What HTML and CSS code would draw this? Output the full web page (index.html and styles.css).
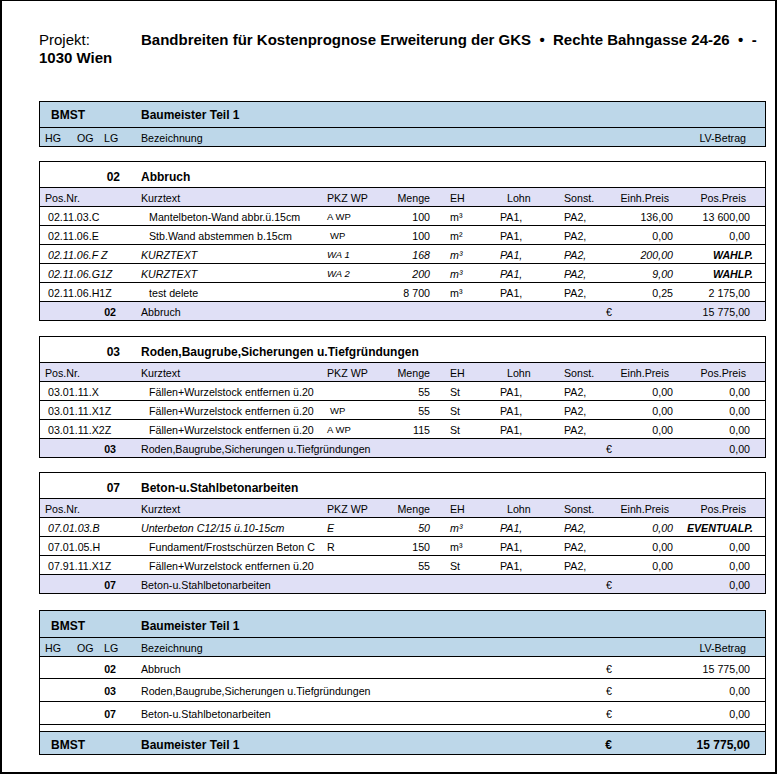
FILE: index.html
```html
<!DOCTYPE html>
<html lang="de">
<head>
<meta charset="utf-8">
<title>Bandbreiten für Kostenprognose</title>
<link rel="stylesheet" href="styles.css">
</head>
<body>
<div class="page">
  <div class="project">
    <div class="pline"><span class="label">Projekt:</span><span class="title">Bandbreiten für Kostenprognose Erweiterung der GKS &nbsp;•&nbsp; Rechte Bahngasse 24-26 &nbsp;•&nbsp; -</span></div>
    <div class="pline title">1030 Wien</div>
  </div>

  <div class="tbl bmst">
    <div class="srow blue head1"><span class="code">BMST</span><span class="name">Baumeister Teil 1</span></div>
    <div class="srow blue colh"><span class="lvl"><span>HG</span><span>OG</span><span>LG</span></span><span class="name">Bezeichnung</span><span class="eur"></span><span class="amt lvb">LV-Betrag</span></div>
  </div>

  <div class="tbl sec">
    <div class="row ti"><span class="num">02</span><span class="tname">Abbruch</span></div>
    <div class="row hd"><span class="pos">Pos.Nr.</span><span class="kt">Kurztext</span><span class="pkz">PKZ WP</span><span class="menge">Menge</span><span class="eh">EH</span><span class="lohn">Lohn</span><span class="sonst">Sonst.</span><span class="ep">Einh.Preis</span><span class="pp">Pos.Preis</span></div>
    <div class="row d"><span class="pos">02.11.03.C</span><span class="kt">Mantelbeton-Wand abbr.ü.15cm</span><span class="pkz">A WP</span><span class="menge">100</span><span class="eh">m³</span><span class="lohn">PA1,</span><span class="sonst">PA2,</span><span class="ep">136,00</span><span class="pp">13 600,00</span></div>
    <div class="row d"><span class="pos">02.11.06.E</span><span class="kt">Stb.Wand abstemmen b.15cm</span><span class="pkz sp">WP</span><span class="menge">100</span><span class="eh">m²</span><span class="lohn">PA1,</span><span class="sonst">PA2,</span><span class="ep">0,00</span><span class="pp">0,00</span></div>
    <div class="row d it"><span class="pos">02.11.06.F Z</span><span class="kt plain">KURZTEXT</span><span class="pkz">WA 1</span><span class="menge">168</span><span class="eh">m³</span><span class="lohn">PA1,</span><span class="sonst">PA2,</span><span class="ep">200,00</span><span class="pp tag">WAHLP.</span></div>
    <div class="row d it"><span class="pos">02.11.06.G1Z</span><span class="kt plain">KURZTEXT</span><span class="pkz">WA 2</span><span class="menge">200</span><span class="eh">m³</span><span class="lohn">PA1,</span><span class="sonst">PA2,</span><span class="ep">9,00</span><span class="pp tag">WAHLP.</span></div>
    <div class="row d"><span class="pos">02.11.06.H1Z</span><span class="kt">test delete</span><span class="pkz"></span><span class="menge">8 700</span><span class="eh">m³</span><span class="lohn">PA1,</span><span class="sonst">PA2,</span><span class="ep">0,25</span><span class="pp">2 175,00</span></div>
    <div class="row tot"><span class="num">02</span><span class="tname">Abbruch</span><span class="eur">€</span><span class="pp">15 775,00</span></div>
  </div>

  <div class="tbl sec gap15">
    <div class="row ti"><span class="num">03</span><span class="tname">Roden,Baugrube,Sicherungen u.Tiefgründungen</span></div>
    <div class="row hd"><span class="pos">Pos.Nr.</span><span class="kt">Kurztext</span><span class="pkz">PKZ WP</span><span class="menge">Menge</span><span class="eh">EH</span><span class="lohn">Lohn</span><span class="sonst">Sonst.</span><span class="ep">Einh.Preis</span><span class="pp">Pos.Preis</span></div>
    <div class="row d"><span class="pos">03.01.11.X</span><span class="kt">Fällen+Wurzelstock entfernen ü.20</span><span class="pkz"></span><span class="menge">55</span><span class="eh">St</span><span class="lohn">PA1,</span><span class="sonst">PA2,</span><span class="ep">0,00</span><span class="pp">0,00</span></div>
    <div class="row d"><span class="pos">03.01.11.X1Z</span><span class="kt">Fällen+Wurzelstock entfernen ü.20</span><span class="pkz sp">WP</span><span class="menge">55</span><span class="eh">St</span><span class="lohn">PA1,</span><span class="sonst">PA2,</span><span class="ep">0,00</span><span class="pp">0,00</span></div>
    <div class="row d"><span class="pos">03.01.11.X2Z</span><span class="kt">Fällen+Wurzelstock entfernen ü.20</span><span class="pkz">A WP</span><span class="menge">115</span><span class="eh">St</span><span class="lohn">PA1,</span><span class="sonst">PA2,</span><span class="ep">0,00</span><span class="pp">0,00</span></div>
    <div class="row tot"><span class="num">03</span><span class="tname">Roden,Baugrube,Sicherungen u.Tiefgründungen</span><span class="eur">€</span><span class="pp">0,00</span></div>
  </div>

  <div class="tbl sec">
    <div class="row ti"><span class="num">07</span><span class="tname">Beton-u.Stahlbetonarbeiten</span></div>
    <div class="row hd"><span class="pos">Pos.Nr.</span><span class="kt">Kurztext</span><span class="pkz">PKZ WP</span><span class="menge">Menge</span><span class="eh">EH</span><span class="lohn">Lohn</span><span class="sonst">Sonst.</span><span class="ep">Einh.Preis</span><span class="pp">Pos.Preis</span></div>
    <div class="row d it"><span class="pos">07.01.03.B</span><span class="kt plain">Unterbeton C12/15 ü.10-15cm</span><span class="pkz big">E</span><span class="menge">50</span><span class="eh">m³</span><span class="lohn">PA1,</span><span class="sonst">PA2,</span><span class="ep">0,00</span><span class="pp tag">EVENTUALP.</span></div>
    <div class="row d"><span class="pos">07.01.05.H</span><span class="kt">Fundament/Frostschürzen Beton C</span><span class="pkz big">R</span><span class="menge">150</span><span class="eh">m³</span><span class="lohn">PA1,</span><span class="sonst">PA2,</span><span class="ep">0,00</span><span class="pp">0,00</span></div>
    <div class="row d"><span class="pos">07.91.11.X1Z</span><span class="kt">Fällen+Wurzelstock entfernen ü.20</span><span class="pkz"></span><span class="menge">55</span><span class="eh">St</span><span class="lohn">PA1,</span><span class="sonst">PA2,</span><span class="ep">0,00</span><span class="pp">0,00</span></div>
    <div class="row tot"><span class="num">07</span><span class="tname">Beton-u.Stahlbetonarbeiten</span><span class="eur">€</span><span class="pp">0,00</span></div>
  </div>

  <div class="tbl summary">
    <div class="srow blue head1"><span class="code">BMST</span><span class="name">Baumeister Teil 1</span></div>
    <div class="srow blue colh"><span class="lvl"><span>HG</span><span>OG</span><span>LG</span></span><span class="name">Bezeichnung</span><span class="eur"></span><span class="amt lvb">LV-Betrag</span></div>
    <div class="srow line first"><span class="lg">02</span><span class="name">Abbruch</span><span class="eur">€</span><span class="amt">15 775,00</span></div>
    <div class="srow line"><span class="lg">03</span><span class="name">Roden,Baugrube,Sicherungen u.Tiefgründungen</span><span class="eur">€</span><span class="amt">0,00</span></div>
    <div class="srow line"><span class="lg">07</span><span class="name">Beton-u.Stahlbetonarbeiten</span><span class="eur">€</span><span class="amt">0,00</span></div>
    <div class="srow spacer"></div>
    <div class="srow blue grand"><span class="code">BMST</span><span class="name">Baumeister Teil 1</span><span class="eur">€</span><span class="amt">15 775,00</span></div>
  </div>
</div>
</body>
</html>
```

FILE: styles.css
```css
* { box-sizing: border-box; }

body {
  margin: 0;
  background: #fff;
  color: #000;
  font-family: "Liberation Sans", Arial, sans-serif;
}

.page {
  width: 777px;
  height: 774px;
  border: solid #000;
  border-width: 1px 2px 2px 2px;
  padding: 30px 0 0 37px;
}

.project {
  width: 726px;
  font-size: 15px;
  line-height: 18px;
}
.pline { display: flex; white-space: nowrap; }
.pline .label { flex: 0 0 102px; }
.title { font-weight: bold; }

.tbl {
  width: 727px;
  border: 1px solid #000;
}
.bmst { margin-top: 34px; }
.sec { margin-top: 14px; }
.sec.gap15 { margin-top: 15px; }
.summary { margin-top: 16px; }

/* ---------- section tables ---------- */
.row {
  display: grid;
  grid-template-columns: 95px 186px 59px 56px 58px 64px 54px 67px 86px;
  height: 19px;
  padding-top: 2px;
  border-bottom: 1px solid #000;
  font-size: 8pt;
  line-height: 16px;
  white-space: nowrap;
}
.tbl > .row:last-child { border-bottom: 0; height: 18px; }

.row > span { display: block; }

.row.ti {
  height: 26px;
  padding-top: 7px;
  font-size: 9pt;
  font-weight: bold;
}
.ti .num { text-align: right; padding-right: 15px; }
.ti .tname { grid-column: 2 / -1; padding-left: 6px; }

.row.hd { background: #e0e0f6; }
.row.tot { background: #e0e0f6; }

.pos { padding-left: 8px; }
.kt { padding-left: 14px; }
.kt.plain { padding-left: 6px; }
.pkz { padding-left: 6px; font-size: 9.5px; }
.pkz.sp { padding-left: 9px; }
.pkz.big { font-size: 8pt; }
.menge { text-align: right; padding-right: 6px; }
.eh { padding-left: 14px; }
.lohn { padding-left: 6px; }
.sonst { padding-left: 6px; }
.ep { text-align: right; padding-right: 6px; }
.pp { text-align: right; padding-right: 15px; }
.pp.tag { padding-right: 12px; font-weight: bold; }

.hd .pos { padding-left: 5px; }
.hd .kt { padding-left: 6px; }
.hd .pkz { font-size: 8pt; }
.hd .lohn { padding-left: 13px; }
.hd .ep { padding-right: 10px; }
.hd .pp { padding-right: 19px; }

.it { font-style: italic; }

.tot .num { text-align: right; padding-right: 19px; font-weight: bold; }
.tot .tname { grid-column: 2 / span 5; padding-left: 6px; }
.tot .eur { grid-column: 7; text-align: right; }
.tot .pp { grid-column: 9; }

/* ---------- summary tables ---------- */
.srow {
  display: grid;
  grid-template-columns: 95px 423px 54px 153px;
  border-bottom: 1px solid #000;
  font-size: 8pt;
  line-height: 16px;
  white-space: nowrap;
}
.srow > span { display: block; }
.blue { background: #bdd7e9; }

.srow.head1 {
  height: 26px;
  padding-top: 5px;
  font-size: 9pt;
  font-weight: bold;
}
.summary .srow.head1 { height: 27px; padding-top: 7px; }

.srow.colh { height: 19px; padding-top: 2px; }
.bmst .srow.colh { height: 18px; border-bottom: 0; }

.srow > .lvl {
  display: grid;
  grid-template-columns: 32px 29px 34px;
}
.lvl span { padding-left: 5px; }
.lvl span:nth-child(3) { padding-left: 3px; }

.code { padding-left: 11px; }
.name { padding-left: 6px; }
.eur { text-align: right; }
.amt { text-align: right; padding-right: 15px; }
.amt.lvb { padding-right: 19px; }

.srow.line { height: 23px; padding-top: 4px; }
.srow.line.first { height: 22px; }
.lg { text-align: right; padding-right: 19px; font-weight: bold; }

.srow.spacer { height: 7px; }

.srow.grand {
  height: 22px;
  padding-top: 5px;
  border-bottom: 0;
  font-size: 9pt;
  font-weight: bold;
}
```
